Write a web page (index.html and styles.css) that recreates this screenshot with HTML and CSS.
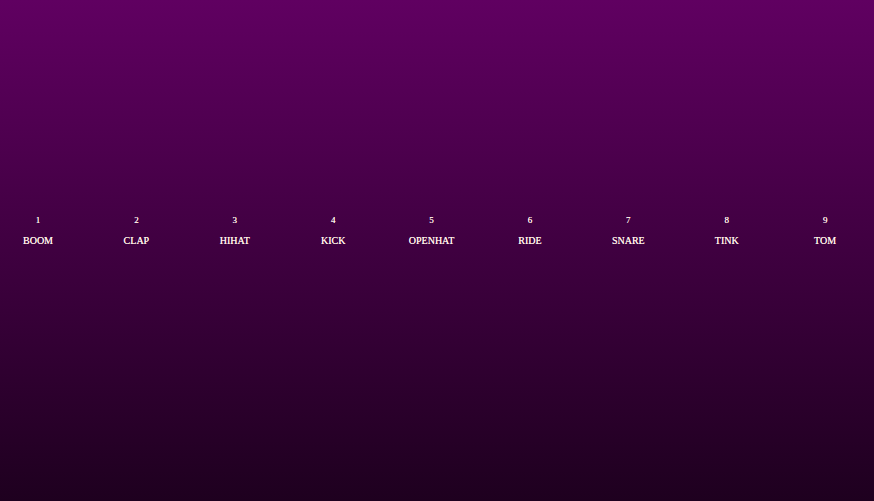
FILE: index.html
```html
<!DOCTYPE html>
<html>
<head>
<meta charset="utf-8">
<link rel="stylesheet" href="styles.css">
</head>
<body>
<div class="keys">
  <div class="key"><kbd class="num">1</kbd><span class="sound">BOOM</span></div>
  <div class="key"><kbd class="num">2</kbd><span class="sound">CLAP</span></div>
  <div class="key"><kbd class="num">3</kbd><span class="sound">HIHAT</span></div>
  <div class="key"><kbd class="num">4</kbd><span class="sound">KICK</span></div>
  <div class="key"><kbd class="num">5</kbd><span class="sound">OPENHAT</span></div>
  <div class="key"><kbd class="num">6</kbd><span class="sound">RIDE</span></div>
  <div class="key"><kbd class="num">7</kbd><span class="sound">SNARE</span></div>
  <div class="key"><kbd class="num">8</kbd><span class="sound">TINK</span></div>
  <div class="key"><kbd class="num">9</kbd><span class="sound">TOM</span></div>
</div>
</body>
</html>
```
FILE: styles.css
```css
html, body {
  margin: 0;
  height: 100%;
}
body {
  background: linear-gradient(to bottom, #600061 0%, #1e001f 100%);
  font-family: "Liberation Serif", "Times New Roman", serif;
  color: #fff0e6;
  overflow: hidden;
}
.keys {
  display: flex;
  gap: 22.4px;
  padding-top: 214px;
}
.key {
  flex: 0 0 76px;
  display: flex;
  flex-direction: column;
  align-items: center;
  gap: 7.5px;
  text-shadow: 0 0 0.5px #fff0e6;
}
.num {
  font-family: "Liberation Serif", serif;
  font-size: 9px;
  line-height: 12px;
}
.sound {
  font-size: 10px;
  line-height: 14px;
}
```
